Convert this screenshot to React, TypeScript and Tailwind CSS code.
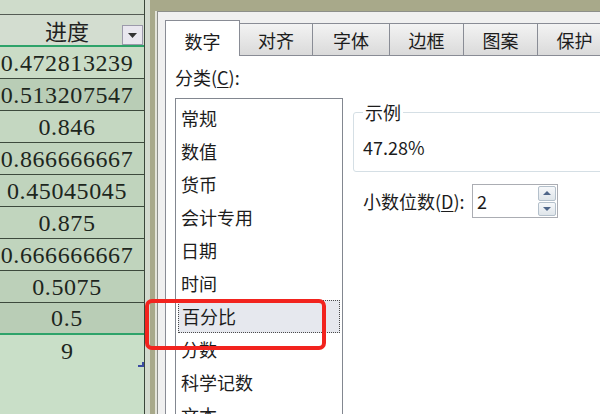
import React from "react";

const rows = [
  { v: "0.472813239", bg: "bg-[#cadcc6]" },
  { v: "0.513207547", bg: "bg-[#b9cdb6]" },
  { v: "0.846", bg: "bg-[#c4d7c1]" },
  { v: "0.866666667", bg: "bg-[#c0d4bd]" },
  { v: "0.45045045", bg: "bg-[#c0d4bd]" },
  { v: "0.875", bg: "bg-[#c1d5be]" },
  { v: "0.666666667", bg: "bg-[#c0d4bd]" },
  { v: "0.5075", bg: "bg-[#bcd0b9]" },
  { v: "0.5", bg: "bg-[#b9cdb6]" },
];

const tabs = [
  { label: "对齐", w: "w-[73px]" },
  { label: "字体", w: "w-[77px]" },
  { label: "边框", w: "w-[74px]" },
  { label: "图案", w: "w-[74px]" },
  { label: "保护", w: "w-[74px]" },
];

const categories = ["常规", "数值", "货币", "会计专用", "日期", "时间", "百分比", "分数", "科学记数", "文本"];

function Sheet() {
  return (
    <div className="w-[150px] shrink-0 flex bg-[#d3dbcf]">
      <div className="w-[145px] flex flex-col border-r border-[#3a463a] text-[#1d261d] font-['Liberation_Serif','Noto_Sans_CJK_SC',serif] text-[24px]">
        <div className="h-[15px] shrink-0 border-b border-[#555c55] bg-[#cfdccb]" />
        <div className="relative h-[32px] shrink-0 flex items-center pr-[10px] border-b-2 border-[#2ea36a] bg-[#d3ddd0]">
          <span className="flex-1 text-center font-['Noto_Sans_CJK_SC',sans-serif] text-[22px] leading-[30px] text-[#222]">进度</span>
          <div className="absolute right-[1px] top-[10px] w-[21px] h-[20px] border border-[#9c9aab] bg-[#e9e7ef] flex items-center justify-center">
            <svg width="9" height="5" viewBox="0 0 9 5">
              <path d="M0 0 L9 0 L4.5 5 Z" fill="#333" />
            </svg>
          </div>
        </div>
        {rows.map((r, i) => (
          <div
            key={i}
            className={`h-[32px] shrink-0 flex items-center justify-center pr-[10px] whitespace-nowrap tracking-[0.6px] ${r.bg} ${
              i === rows.length - 1 ? "border-b-2 border-[#2ea36a]" : "border-b border-[#3d4a3d]"
            }`}
          >
            {r.v}
          </div>
        ))}
        <div className="h-[32px] shrink-0 flex items-center justify-center pr-[10px] bg-[#c9dfc8]">9</div>
        <div className="flex-1 bg-[#c9dfc8]" />
      </div>
    </div>
  );
}

function Spin() {
  return (
    <div className="w-[86px] h-[34px] border border-[#abadb3] bg-white flex">
      <span className="flex-1 pl-[4px] leading-[32px]">2</span>
      <div className="w-[20px] flex flex-col gap-px p-px">
        <div className="flex-1 rounded-[2px] border border-[#b4c0cb] bg-linear-to-b from-[#f6f8fa] to-[#dfe5ea] flex items-center justify-center">
          <svg width="8" height="4" viewBox="0 0 8 4">
            <path d="M0 4 L4 0 L8 4 Z" fill="#4f6689" />
          </svg>
        </div>
        <div className="flex-1 rounded-[2px] border border-[#b4c0cb] bg-linear-to-b from-[#f6f8fa] to-[#dfe5ea] flex items-center justify-center">
          <svg width="8" height="4" viewBox="0 0 8 4">
            <path d="M0 0 L8 0 L4 4 Z" fill="#4f6689" />
          </svg>
        </div>
      </div>
    </div>
  );
}

function Dialog() {
  return (
    <div className="flex-1 flex flex-col bg-[#a8a98a] pl-[5px] pt-[11px]">
      <div className="flex-1 flex flex-col border-l-2 border-[#e2e3d8]">
        <div className="flex-1 flex flex-col border-l border-t border-[#8d8f8a] bg-[#f0f0f0] pl-[7px] pt-[8px] font-['Noto_Sans_CJK_SC',sans-serif] text-[18px] text-[#1c1c1c]">
          <div className="h-[35px] shrink-0 flex items-end">
            <div className="relative z-10 -mb-px w-[75px] h-[36px] bg-white border border-b-0 border-[#898c95] flex justify-center pt-[5px] leading-[30px]">
              数字
            </div>
            {tabs.map((t) => (
              <div
                key={t.label}
                className={`${t.w} h-[32px] shrink-0 border-t border-r border-[#898c95] bg-linear-to-b from-[#f3f3f3] to-[#dadada] flex justify-center pt-[2px] leading-[28px]`}
              >
                {t.label}
              </div>
            ))}
          </div>
          <div className="flex-1 flex bg-white border-l border-t border-[#898c95]">
            <div className="pl-[9px] shrink-0">
              <div className="mt-[9px] leading-[24px]">
                分类(<span className="underline underline-offset-2">C</span>):
              </div>
              <div className="mt-[9px] w-[168px] h-[400px] border border-[#828790] pt-[3px] flex flex-col">
                {categories.map((c) => (
                  <div
                    key={c}
                    className={`h-[33px] shrink-0 mx-[2px] pl-[3px] flex items-center ${
                      c === "百分比" ? "bg-[#e6e8ee] border border-dotted border-[#4a4a4a] pl-[2px]" : ""
                    }`}
                  >
                    {c}
                  </div>
                ))}
              </div>
            </div>
            <div className="ml-[10px] flex flex-col">
              <fieldset className="mt-[46px] w-[320px] border border-[#d5dfe5] rounded-[3px] pl-[9px] pb-[12px]">
                <legend className="px-[2px] leading-[20px]">示例</legend>
                <div className="pt-[13px] leading-[24px]">47.28%</div>
              </fieldset>
              <div className="mt-[12px] pl-[10px] flex items-center">
                <span className="w-[109px] shrink-0 leading-[24px]">
                  小数位数(<span className="underline underline-offset-2">D</span>):
                </span>
                <Spin />
              </div>
            </div>
          </div>
        </div>
      </div>
    </div>
  );
}

export default function App() {
  return (
    <div className="relative w-[600px] h-[414px] overflow-hidden flex bg-white">
      <Sheet />
      <Dialog />
      <div className="absolute left-[138px] top-[362px] w-[6px] h-[5px] border-b-2 border-r-2 border-[#3a4aa0]" />
      <div className="absolute left-[145px] top-[299px] w-[181px] h-[51px] border-4 border-[#f2231e] rounded-[7px] pointer-events-none" />
    </div>
  );
}
